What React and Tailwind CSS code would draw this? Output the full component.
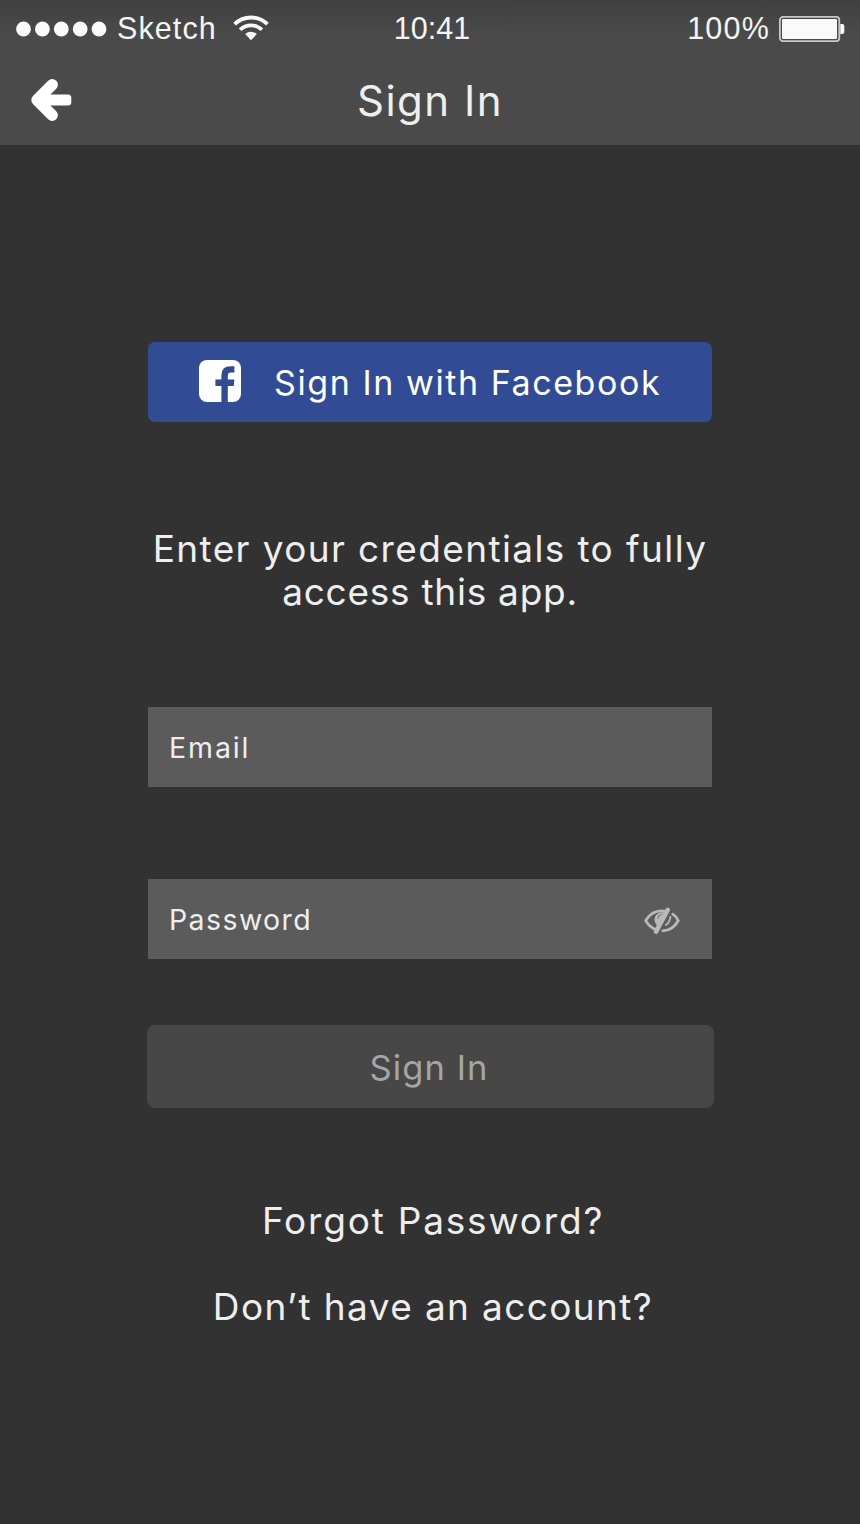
import React from 'react';

function StatusBar() {
  return (
    <div className="grid h-[57px] grid-cols-3 items-center font-['Liberation_Sans',sans-serif] text-[30.5px] leading-none text-[#f4f4f4]">
      <div className="flex items-center pl-4">
        <svg className="shrink-0" width="91" height="16" viewBox="0 0 91 16" fill="#fafafa">
          {[7.5, 26.4, 45.3, 64.2, 83].map((x) => (
            <circle key={x} cx={x} cy="8" r="7.4" />
          ))}
        </svg>
        <span className="ml-[10px] w-[116px] shrink-0 whitespace-nowrap tracking-[1.1px]">Sketch</span>
        <svg className="mb-0.5 shrink-0" width="36" height="26" viewBox="0 0 36 26" fill="none" stroke="#fafafa">
          <path d="M1.6 9.2a23.4 23.4 0 0 1 32.8 0" strokeWidth="3.8" />
          <path d="M7.1 14.8a15.4 15.4 0 0 1 21.8 0" strokeWidth="3.7" />
          <path d="M18 25.2l-5.8-6.1a8.1 8.1 0 0 1 11.6 0z" fill="#fafafa" stroke="none" />
        </svg>
      </div>
      <span className="pl-1 text-center">10:41</span>
      <div className="flex items-center justify-end pr-[14px]">
        <span className="tracking-[1.2px]">100%</span>
        <svg className="ml-[9px]" width="67" height="26" viewBox="0 0 67 26">
          <rect x="0.9" y="0.9" width="59.4" height="24.2" rx="3.2" fill="none" stroke="#c8c8c8" strokeWidth="1.8" />
          <rect x="3" y="3" width="55" height="20" rx="1.2" fill="#fafafa" />
          <path d="M61.3 8H63.2Q65.3 8 65.3 10V16Q65.3 18 63.2 18H61.3Z" fill="#fafafa" />
        </svg>
      </div>
    </div>
  );
}

function Header() {
  return (
    <header className="h-[145px] bg-[linear-gradient(#404040,#4a4a4a_36px)]">
      <StatusBar />
      <div className="grid h-[88px] grid-cols-[100px_1fr_100px] items-center">
        <button aria-label="Back" className="mb-[3px] pl-[30px]">
          <svg width="42" height="44" viewBox="30 78 42 44" fill="none" stroke="#fff" strokeWidth="11.4" strokeLinecap="round" strokeLinejoin="round">
            <path d="M52.2 84.8L37 100l15.2 15.2" />
            <path d="M40 94.5H68.1Q71.3 94.5 71.3 98V102Q71.3 105.5 68.1 105.5H40Z" fill="#fff" stroke="none" />
          </svg>
        </button>
        <h1 className="text-center text-[42px] leading-none tracking-[1.5px]">Sign In</h1>
      </div>
    </header>
  );
}

function EyeSlash() {
  return (
    <svg className="mt-1" width="36" height="28" viewBox="0 0 36 28" fill="none" stroke="#b9b9b9" strokeWidth="2.7" strokeLinecap="round">
      <path d="M21.5 4.3C13 2.8 6 6.5 1.7 13.5C4 17.8 7.6 21 12.2 22.8" />
      <path d="M28.8 7.2C31.2 8.8 33 10.9 34.3 13.5C30.8 20 25.5 23.6 18.8 23.8" />
      <path d="M20 5.2C14.3 4.8 10.4 8.3 10.5 12.7C10.6 15.2 11.6 17.2 13.7 18.8Z" fill="#b9b9b9" stroke="none" />
      <path d="M14 11.2Q14.5 8 18 7.5" stroke="#777" strokeWidth="1.2" />
      <path d="M23.7 2.9L12 24.6" strokeWidth="4.6" />
      <path d="M26.4 9.8Q26 14.5 22 18" strokeWidth="1.8" />
    </svg>
  );
}

function Field({ label, className, children }) {
  return (
    <div className="flex h-20 items-center justify-between bg-[#5b5b5b] pl-[21px] pr-8 text-[28.5px] leading-none">
      <span className={className}>{label}</span>
      {children}
    </div>
  );
}

export default function App() {
  return (
    <div className="min-h-[1524px] w-[860px] bg-[#323232] font-['Inter',sans-serif] font-normal text-[#eeeeee]">
      <Header />
      <main className="mx-auto flex w-[564px] flex-col pt-[196.5px]">
        <button className="flex h-[80px] items-center rounded-[7px] bg-[#314c94] pl-[51px] text-white">
          <svg className="mb-[2px]" width="42" height="42" viewBox="0 0 42 42">
            <rect width="42" height="42" rx="8" fill="#fff" />
            <path d="M22.4 42V26H16.4V19.4H22.4V15.3Q22.4 6.3 31.5 6.3H35.4V12.6H32Q28.8 12.6 28.8 16V19.4H35.4L34.7 26H28.8V42Z" fill="#314c94" />
          </svg>
          <span className="ml-[33px] mt-[3px] whitespace-nowrap text-[34px] leading-none tracking-[1.58px]">Sign In with Facebook</span>
        </button>
        <p className="mt-[105.5px] whitespace-nowrap text-center text-[37px] leading-[43px]">
          <span className="tracking-[1.38px]">Enter your credentials to fully</span>
          <br />
          <span className="tracking-[0.75px]">access this app.</span>
        </p>
        <div className="mt-[94px]">
          <Field label="Email" className="mt-0.5 tracking-[1.9px]" />
        </div>
        <div className="mt-[92px]">
          <Field label="Password" className="mt-0.5 tracking-[1.4px]">
            <EyeSlash />
          </Field>
        </div>
        <button className="-mx-[1.5px] mt-[66px] h-[83px] rounded-lg bg-[#474747] pr-0.5 pt-1 text-[34.5px] leading-none tracking-[1.1px] text-[#a5a5a5]">Sign In</button>
        <a className="mt-[91px] pl-1.5 text-center text-[37px] leading-[43px] tracking-[1.8px]">Forgot Password?</a>
        <a className="mt-[43px] pl-1.5 text-center text-[37px] leading-[43px] tracking-[1.38px]">Don’t have an account?</a>
      </main>
    </div>
  );
}
